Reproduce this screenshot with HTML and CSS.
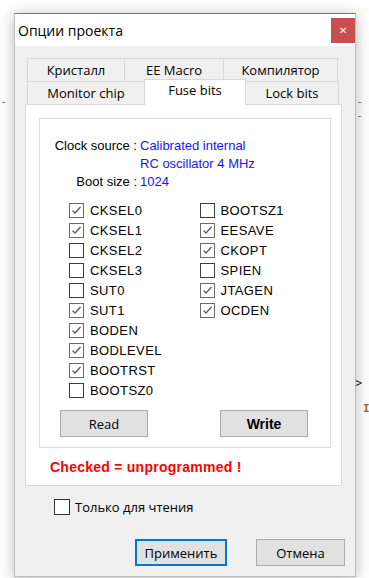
FILE: index.html
```html
<!DOCTYPE html>
<html lang="ru">
<head>
  <meta charset="UTF-8" />
  <title>Опции проекта</title>
  <link rel="stylesheet" href="styles.css">
</head>
<body>

  <div class="backdrop-dash left">- -</div>
  <div class="backdrop-dash right">- -</div>
  <div class="backdrop-mark arrow">&gt;</div>
  <div class="backdrop-mark beam">I</div>

  <div class="window">
    <div class="titlebar">
      <span class="title">Опции проекта</span>
      <span class="close">&#x2715;</span>
    </div>

    <div class="client">
      <div class="tabs">
        <div class="tab-row">
          <div class="tab" style="width: 98px;">Кристалл</div>
          <div class="tab" style="width: 100px;">EE Macro</div>
          <div class="tab" style="width: 115px;">Компилятор</div>
        </div>
        <div class="tab-row">
          <div class="tab" style="width: 118px;">Monitor chip</div>
          <div class="tab active" style="width: 102px;">Fuse bits</div>
          <div class="tab" style="width: 94px;">Lock bits</div>
        </div>
      </div>

      <div class="panel">
        <div class="groupbox">
          <div class="info">
            <span class="info-label">Clock source :</span>
            <span class="info-value">Calibrated internal<br>RC oscillator 4 MHz</span>
            <span class="info-label">Boot size :</span>
            <span class="info-value">1024</span>
          </div>

          <div class="fuses" id="fuses"></div>

          <div class="fuse-buttons">
            <button class="btn">Read</button>
            <button class="btn bold">Write</button>
          </div>
        </div>
        <div class="warning">Checked = unprogrammed !</div>
      </div>

      <label class="readonly">
        <span class="box"></span>
        <span>Только для чтения</span>
      </label>

      <div class="dialog-buttons">
        <button class="btn default">Применить</button>
        <button class="btn">Отмена</button>
      </div>
    </div>
  </div>

  <script>
    // список fuse-битов: имя и состояние галочки
    const left = [
      ["CKSEL0", true], ["CKSEL1", true], ["CKSEL2", false], ["CKSEL3", false],
      ["SUT0", false], ["SUT1", true], ["BODEN", true], ["BODLEVEL", true],
      ["BOOTRST", true], ["BOOTSZ0", false]
    ];
    const right = [
      ["BOOTSZ1", false], ["EESAVE", true], ["CKOPT", true], ["SPIEN", false],
      ["JTAGEN", true], ["OCDEN", true]
    ];

    const tick = '<svg width="13" height="13" viewBox="0 0 13 13"><polyline points="2.5,6.5 5,9 10.5,3" fill="none" stroke="#5c5c5c" stroke-width="1.3"/></svg>';

    function makeColumn(items) {
      const col = document.createElement("div");
      col.className = "fuse-col";
      items.forEach(([name, checked]) => {
        const row = document.createElement("div");
        row.className = "fuse";
        row.innerHTML = `<span class="box${checked ? " on" : ""}">${checked ? tick : ""}</span><span>${name}</span>`;
        col.appendChild(row);
      });
      return col;
    }

    const fuses = document.getElementById("fuses");
    fuses.appendChild(makeColumn(left));
    fuses.appendChild(makeColumn(right));
  </script>
</body>
</html>
```

FILE: styles.css
```css
body {
  margin: 0;
  width: 369px;
  height: 578px;
  overflow: hidden;
  background: #fff;
  position: relative;
  font-family: "Open Sans", "Noto Sans", sans-serif;
  color: #000;
}

/* то, что видно за окном */
.backdrop-dash {
  position: absolute;
  top: 95px;
  font-family: "DejaVu Sans Mono", monospace;
  font-size: 12px;
  color: #888;
  letter-spacing: 1px;
}
.backdrop-dash.left { left: 0; }
.backdrop-dash.right { left: 356px; }

.backdrop-mark {
  position: absolute;
  font-family: "DejaVu Sans Mono", monospace;
  font-size: 12px;
}
.backdrop-mark.arrow { left: 355px; top: 376px; color: #333; }
.backdrop-mark.beam { left: 363px; top: 402px; color: #8a6d3b; font-weight: bold; font-size: 11px; }

.window {
  position: relative;
  z-index: 1;
  margin: 13px 0 0 14px;
  width: 342px;
  height: 564px;
  box-sizing: border-box;
  border: 1px solid #bdbdbd;
  border-top-color: #2b88d8;
  background: #f0f0f0;
  box-shadow: 0 2px 14px rgba(0, 0, 0, 0.28);
  display: flex;
  flex-direction: column;
}

.titlebar {
  height: 32px;
  background: #fff;
  display: flex;
  align-items: center;
  justify-content: space-between;
  padding-left: 3px;
}

.title {
  font-size: 14px;
}

.close {
  width: 24px;
  height: 25px;
  background: #c94f4f;
  color: #fff;
  font-size: 10px;
  display: flex;
  align-items: center;
  justify-content: center;
}

.client {
  flex: 1;
  padding: 12px 0 0 10px;
  display: flex;
  flex-direction: column;
}

.tabs {
  padding-left: 2px;
}

.tab-row {
  display: flex;
  height: 23px;
}

.tab {
  box-sizing: border-box;
  height: 24px;
  margin-left: -1px;
  border: 1px solid #d9d9d9;
  background: #f0f0f0;
  font-size: 13px;
  display: flex;
  align-items: center;
  justify-content: center;
}
.tab:first-child { margin-left: 0; }

.tab.active {
  position: relative;
  z-index: 2;
  background: #fff;
  height: 26px;
  margin-top: -2px;
  border-bottom: none;
  align-items: flex-start;
  padding-top: 1px;
}

.panel {
  width: 317px;
  height: 382px;
  box-sizing: border-box;
  border: 1px solid #d9d9d9;
  background: #fff;
  padding: 13px 0 0 13px;
  position: relative;
  z-index: 1;
  font-family: "Liberation Sans", Arial, sans-serif;
  font-size: 13px;
}

.groupbox {
  width: 292px;
  height: 330px;
  box-sizing: border-box;
  border: 1px solid #dcdcdc;
  padding: 18px 0 0 0;
}

.info {
  display: grid;
  grid-template-columns: 97px auto;
  column-gap: 3px;
  line-height: 18px;
}

.info-label {
  text-align: right;
}

.info-value {
  color: #1414ff;
}

.fuses {
  display: flex;
  margin-top: 9px;
  padding-left: 29px;
}

.fuse-col {
  width: 145px;
}

.fuse {
  display: flex;
  align-items: center;
  height: 20px;
  gap: 6px;
  letter-spacing: 0.4px;
}

.box {
  width: 13px;
  height: 13px;
  border: 1px solid #3c3c3c;
  background: #fff;
  display: flex;
}

.box.on {
  border-color: #6a6a6a;
}

.fuse-buttons {
  display: flex;
  gap: 72px;
  margin-top: 10px;
  padding-left: 20px;
}

.btn {
  box-sizing: border-box;
  width: 88px;
  height: 27px;
  background: #e1e1e1;
  border: 1px solid #adadad;
  font-family: "Open Sans", "Noto Sans", sans-serif;
  font-size: 13px;
  color: #000;
  padding: 0;
}

.btn.bold {
  font-family: "Liberation Sans", Arial, sans-serif;
  font-weight: bold;
  font-size: 14px;
}

.warning {
  color: #f00;
  font-weight: bold;
  font-size: 14px;
  letter-spacing: 0.25px;
  margin: 11px 0 0 11px;
}

.readonly {
  display: flex;
  align-items: center;
  gap: 5px;
  margin: 12px 0 0 29px;
  font-size: 13px;
}

.readonly .box {
  width: 14px;
  height: 14px;
  border-color: #333;
}

.dialog-buttons {
  display: flex;
  gap: 29px;
  margin: 23px 0 0 110px;
}

.dialog-buttons .btn {
  width: 89px;
  height: 27px;
}

.btn.default {
  width: 92px;
  border: 2px solid #0078d7;
}
```
